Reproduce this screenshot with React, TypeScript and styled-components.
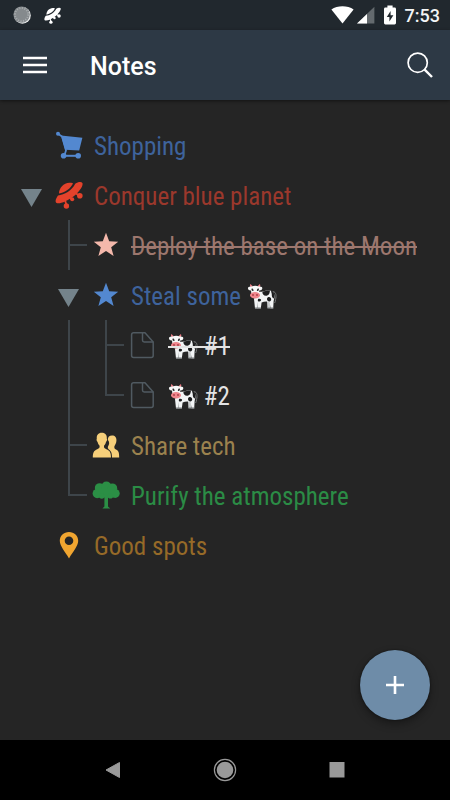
import React from 'react';
import styled, { createGlobalStyle } from 'styled-components';

const GlobalStyle = createGlobalStyle`
  *, *::before, *::after { box-sizing: border-box; }
  body {
    margin: 0;
    background: #252525;
    color: #f2f2f2;
    font-family: Roboto, "Liberation Sans", sans-serif;
  }
  svg { display: block; flex: none; }
`;

const Screen = styled.div`
  display: flex;
  flex-direction: column;
  min-height: 100vh;
`;

const StatusBar = styled.div`
  display: flex;
  align-items: center;
  justify-content: space-between;
  height: 30px;
  padding: 0 10px 0 13px;
  background: #21282e;
`;

const StatusGroup = styled.div<{ $gap: number }>`
  display: flex;
  align-items: center;
  gap: ${p => p.$gap}px;
`;

const Clock = styled.time`
  padding-top: 2px;
  font-size: 18px;
  line-height: 24px;
  font-weight: 500;
  color: #f4f5f5;
`;

const AppBar = styled.header`
  display: flex;
  align-items: center;
  height: 70px;
  padding: 0 10px 0 15px;
  background: #2d3945;
  box-shadow: 0 1px 3px rgba(0, 0, 0, 0.5);
`;

const Title = styled.h1`
  flex: 1;
  margin: 0 0 0 35px;
  padding-top: 4px;
  font-size: 25px;
  line-height: 32px;
  font-weight: 500;
  color: #fff;
`;

const IconButton = styled.button`
  display: flex;
  align-items: center;
  justify-content: center;
  width: 40px;
  height: 40px;
  padding: 0;
  border: 0;
  background: none;
  color: #fff;
  cursor: pointer;
`;

const Main = styled.main`
  display: flex;
  flex-direction: column;
  flex: 1;
`;

const Tree = styled.ul`
  flex: 1;
  margin: 0;
  padding: 20px 13px 0;
  list-style: none;
`;

const Row = styled.li`
  display: flex;
  align-items: center;
  height: 50px;
`;

const Cell = styled.span`
  display: flex;
  flex: none;
  align-items: center;
  justify-content: center;
  width: 38px;
  height: 50px;
`;

const Toggle = styled.button`
  display: flex;
  flex: none;
  align-items: center;
  justify-content: center;
  width: 37px;
  height: 50px;
  padding: 6px 0 0;
  border: 0;
  background: none;
  cursor: pointer;
`;

const Guide = styled.span`
  display: flex;
  flex: none;
  flex-direction: column;
  width: 37px;
  height: 50px;
  padding-left: 18px;
`;

const GuideTop = styled.span<{ $tick: boolean }>`
  height: 26px;
  border-left: 2px solid #3e454a;
  border-bottom: ${p => (p.$tick ? '2px solid #3e454a' : '0')};
`;

const GuideBottom = styled.span`
  height: 24px;
  border-left: 2px solid #3e454a;
`;

const Label = styled.span<{ $color: string }>`
  position: relative;
  display: inline-flex;
  align-items: center;
  margin-left: 6px;
  padding-top: 4px;
  font-family: "Roboto Condensed", Roboto, sans-serif;
  font-size: 25px;
  line-height: 32px;
  white-space: pre;
  color: ${p => p.$color};
`;

const StruckLabel = styled(Label).attrs({ as: 's' })`
  text-decoration: none;

  &::after {
    content: '';
    position: absolute;
    left: 0;
    right: 0;
    top: 19px;
    height: 2px;
    background: currentColor;
  }
`;

const FabArea = styled.div`
  display: flex;
  justify-content: flex-end;
  padding: 0 20px 20px;
`;

const Fab = styled.button`
  display: flex;
  align-items: center;
  justify-content: center;
  width: 70px;
  height: 70px;
  padding: 0;
  border: 0;
  border-radius: 50%;
  background: #6e8ca8;
  box-shadow: 0 0 2px rgba(0, 0, 0, 0.6), 0 4px 8px rgba(0, 0, 0, 0.35);
  cursor: pointer;
`;

const NavBar = styled.nav`
  display: flex;
  align-items: center;
  justify-content: center;
  gap: 72px;
  height: 60px;
  background: #000;
`;

const CartIcon = () => (
  <svg width="28" height="28" viewBox="0 0 28 28" fill="#5388d0">
    <circle cx="3" cy="2.8" r="2" />
    <path d="M3 2.8 L7 5.5 L11 19.5 L9.5 24" fill="none" stroke="#5388d0" strokeWidth="1.8" />
    <path d="M6 4.6 L27.4 6.8 L24.2 19.4 L10.2 18.8 Z" />
    <path d="M9 24.8 H23.5" stroke="#5388d0" strokeWidth="2" />
    <circle cx="8.6" cy="24.8" r="2.8" />
    <circle cx="23.2" cy="24.8" r="2.8" />
  </svg>
);

const UfoIcon = ({ size, color }: { size: number; color: string }) => (
  <svg width={size} height={size} viewBox="0 0 28 28" fill={color}>
    <path d="M4 12.6 C3.8 7 8.6 2 14.4 1.7 C16.4 1.6 17.8 1.9 18 2.6 C15.6 7.6 10 11.8 4 12.6 Z" />
    <path d="M20.2 2.7 C23 .9 26.4 .6 27.4 2 C28.6 4.5 24.4 11 18.4 15.5 C12.4 20 3.8 23.8 1.2 21.8 C-.2 20.4 1 17 3 14.4 C9.4 13.8 17 9.5 20.2 2.7 Z" />
    <path d="M10 19 L11.4 24 M14.5 16 L16.8 18 M20.5 12 L24.4 15" stroke={color} strokeWidth="1.8" />
    <circle cx="11.4" cy="25" r="2.7" />
    <circle cx="17.2" cy="18.2" r="2" />
    <circle cx="24.8" cy="14.8" r="2.8" />
  </svg>
);

const StarIcon = ({ color }: { color: string }) => (
  <svg width="26" height="26" viewBox="0 0 26 26" fill={color}>
    <path d="M13 .8 L16.2 9.2 L25.2 9.7 L18.2 15.3 L20.6 24 L13 19 L5.4 24 L7.8 15.3 L.8 9.7 L9.8 9.2 Z" />
  </svg>
);

const FileIcon = () => (
  <svg width="26" height="28" viewBox="0 0 26 28" fill="none" stroke="#505a61" strokeWidth="1.5" strokeLinejoin="round">
    <path d="M15 1.8 H3.6 Q1.6 1.8 1.6 3.8 V24.4 Q1.6 26.4 3.6 26.4 H21.2 Q23.2 26.4 23.2 24.4 V11 Z" />
    <path d="M12.5 1.8 V9.3 Q12.5 11 14.2 11 H23.2" />
  </svg>
);

const PeopleIcon = () => (
  <svg width="28" height="26" viewBox="0 0 28 26" fill="#f6cf7a">
    <path d="M15.8 7.8 C15.8 4.8 17.4 3.4 20 3.4 C23 3.4 24.8 5.4 24.4 9 C24.2 11.6 23 13 22.4 14.2 C22.2 16 22.4 16.6 24 17.6 C26.6 19 27.2 20.4 27.2 25.6 H20 C20 20.8 19 18.8 16.8 17.4 C16 16.8 15.6 16 16 14.6 C17.4 12.4 17.8 10 15.8 7.8 Z" />
    <path d="M9.8 .8 C13.4 .8 15.2 3.2 14.8 6.6 C15.4 8.2 14.8 9.4 14 10 C13.6 11.8 12.8 12.8 12 13.8 C11.8 15.8 12.4 16.4 14.4 17.2 C17.8 18.6 19 20.2 19 25.6 H.8 C.8 20.2 2 18.6 5.2 17.2 C7.2 16.4 7.8 15.8 7.6 13.8 C6.8 12.8 6 11.8 5.6 10 C4.8 9.4 4.2 8.2 4.8 6.6 C4.4 3.2 6.2 .8 9.8 .8 Z" />
  </svg>
);

const TreeIcon = () => (
  <svg width="28" height="28" viewBox="0 0 28 28" fill="#2b8f45">
    <circle cx="5.2" cy="12.6" r="4.6" />
    <circle cx="7.6" cy="7" r="4.8" />
    <circle cx="14.4" cy="5.6" r="5" />
    <circle cx="20.4" cy="7.2" r="4.8" />
    <circle cx="23.2" cy="12.4" r="4.5" />
    <path d="M5 8 H22 V16.4 H5 Z" />
    <circle cx="9.8" cy="15" r="2.8" />
    <circle cx="18.4" cy="15" r="2.6" />
    <path d="M12.4 16 H16 V25.4 L18.2 27.6 H10.4 L12.4 25.4 Z" />
  </svg>
);

const PinIcon = () => (
  <svg width="20" height="28" viewBox="0 0 20 28" fill="#f0a530">
    <path fillRule="evenodd" d="M10 1 C15.2 1 19.2 4.8 19.2 9.8 C19.2 15.2 14 20.4 10 27.4 C6 20.4 .8 15.2 .8 9.8 C.8 4.8 4.8 1 10 1 Z M10 5.4 A4.3 4.3 0 1 0 10 14 A4.3 4.3 0 1 0 10 5.4 Z" />
  </svg>
);

const CowIcon = () => (
  <svg width="30" height="28" viewBox="0 0 30 28" role="img" aria-label="cow">
    <path d="M26 8.6 C29.4 9 29.4 13 28.6 16.4 C28.4 18 28.2 19 27.6 20" fill="none" stroke="#77797a" strokeWidth="1" />
    <path d="M20 18 L20.4 25 H23 L23.6 18 Z M9.6 17 L10.2 25 H13 L13.4 18 Z" fill="#c9cccd" />
    <path d="M10 8.4 C14 9.6 17 7.6 21 7.4 C25.6 7.2 27.6 9.4 27.4 14 C27.2 16 26.8 17 26.6 18.6 L26.2 25.4 H23.6 L22.6 19.2 C20 18 17 18.4 14.6 19.6 L13.8 25.4 H8 L7 16 Z" fill="#f1f3f4" />
    <path d="M10.4 19 L10.9 25.4 H9.9 Z" fill="#9ea1a3" />
    <path d="M15.4 8.8 C17.6 8 21 7.2 23 7.5 C22.6 10 22.4 11.8 20.2 12.6 C17.4 13.4 15 11.4 15.4 8.8 Z M24.2 7.8 C27.4 8.6 27.8 12.4 26.8 15.6 C25.4 15.2 24.6 13.4 24.8 11.6 C24.9 10.2 23.8 9 24.2 7.8 Z M21 14.2 C22.8 13.4 24.2 14.8 24.2 16.6 C24.2 18.2 22.8 18.8 21.4 18.2 C19.8 17.4 19.4 15 21 14.2 Z M11 16 C12.8 15.2 14.6 16 14 17.6 C13.2 19 11.6 18.6 10.8 18 Z" fill="#1c1d1e" />
    <path d="M8 25.2 H13.8 M20.4 25.2 H26.2" stroke="#777a7c" strokeWidth="1.2" />
    <path d="M3.9 4.6 C2.6 3 2.8 1.4 3.8 1 C4.2 2.2 5 2.6 6 3.4 Z M12.3 4.6 C13.8 3 13.4 1.4 12.6 1 C12.2 2.2 11.2 2.6 10.4 3.4 Z" fill="#ee7d86" />
    <path d="M4.8 3.6 C6.6 2.4 9.8 2.4 11.6 3.6 C13.2 3.8 14.8 3.6 15.4 5 C15.2 7 13.6 7.6 12.2 7.4 L11.6 12.4 H4.6 L4 7.4 C2.6 7.6 1 7 .9 5 C1.6 3.6 3.2 3.8 4.8 3.6 Z" fill="#f7f8f8" />
    <path d="M4.9 5.2 Q6.6 5.2 6.6 8 Q5 8.4 4.4 6.8 Z M11.5 5.2 Q9.8 5.2 9.8 8 Q11.4 8.4 12 6.8 Z" fill="#292b2c" />
    <ellipse cx="8" cy="12.2" rx="5" ry="3.2" fill="#ef858c" />
    <circle cx="6" cy="12" r=".9" fill="#a83b44" />
    <circle cx="10" cy="12" r=".9" fill="#a83b44" />
  </svg>
);

type GuideKind = 'line' | 'tee' | 'elbow' | 'blank';

interface Note {
  guides: GuideKind[];
  open?: boolean;
  icon: React.ReactNode;
  color: string;
  struck?: boolean;
  content: React.ReactNode;
}

const notes: Note[] = [
  { guides: ['blank'], icon: <CartIcon />, color: '#3e639c', content: 'Shopping' },
  { guides: [], open: true, icon: <UfoIcon size={28} color="#e3422b" />, color: '#9b382c', content: 'Conquer blue planet' },
  { guides: ['blank', 'tee'], icon: <StarIcon color="#f4b8ab" />, color: '#9d776e', struck: true, content: 'Deploy the base on the Moon' },
  { guides: ['blank'], open: true, icon: <StarIcon color="#5388d0" />, color: '#3e639c', content: <>Steal some <CowIcon /></> },
  { guides: ['blank', 'line', 'tee'], icon: <FileIcon />, color: '#e4e4e4', struck: true, content: <><CowIcon /> #1</> },
  { guides: ['blank', 'line', 'elbow'], icon: <FileIcon />, color: '#e4e4e4', content: <><CowIcon /> #2</> },
  { guides: ['blank', 'tee'], icon: <PeopleIcon />, color: '#9b824e', content: 'Share tech' },
  { guides: ['blank', 'elbow'], icon: <TreeIcon />, color: '#2b8c45', content: 'Purify the atmosphere' },
  { guides: ['blank'], icon: <PinIcon />, color: '#966a28', content: 'Good spots' },
];

const GuideMark = ({ kind }: { kind: GuideKind }) => (
  <Guide>
    {kind !== 'blank' && <GuideTop $tick={kind !== 'line'} />}
    {(kind === 'line' || kind === 'tee') && <GuideBottom />}
  </Guide>
);

const NoteRow = ({ note }: { note: Note }) => {
  const Text = note.struck ? StruckLabel : Label;
  return (
    <Row>
      {note.guides.map((kind, i) => <GuideMark key={i} kind={kind} />)}
      {note.open && (
        <Toggle aria-label="Collapse" aria-expanded="true">
          <svg width="21" height="18" viewBox="0 0 21 18" fill="#74838b"><path d="M0 0 H21 L10.5 18 Z" /></svg>
        </Toggle>
      )}
      <Cell>{note.icon}</Cell>
      <Text $color={note.color}>{note.content}</Text>
    </Row>
  );
};

const SpinnerIcon = () => (
  <svg width="18" height="18" viewBox="0 0 18 18">
    <circle cx="9.4" cy="9.4" r="8.4" fill="#e8eaea" />
    <circle cx="8.6" cy="8.6" r="8.2" fill="#858a8d" />
    <circle cx="8.6" cy="8.6" r="6.6" fill="none" stroke="#a9adaf" strokeWidth="2" strokeDasharray="1 1.6" />
  </svg>
);

export default function App() {
  return (
    <Screen>
      <GlobalStyle />
      <StatusBar>
        <StatusGroup $gap={13}>
          <SpinnerIcon />
          <UfoIcon size={17} color="#fff" />
        </StatusGroup>
        <StatusGroup $gap={9}>
          <StatusGroup $gap={3}>
            <svg width="23" height="18" viewBox="0 0 23 18" fill="#fff"><path d="M.4 3.6 C6.4 -.8 16.6 -.8 22.6 3.6 L11.5 17.6 Z" /></svg>
            <svg width="18" height="18" viewBox="0 0 18 18">
              <path d="M0 17.6 L17.4 .8 V17.6 Z" fill="#646a6e" />
              <path d="M0 17.6 L10 8 V17.6 Z" fill="#fff" />
            </svg>
          </StatusGroup>
          <svg width="12" height="20" viewBox="0 0 12 20">
            <path d="M3.4 .6 H8.6 V2.6 H10.6 Q12 2.6 12 4 V18 Q12 19.4 10.6 19.4 H1.4 Q0 19.4 0 18 V4 Q0 2.6 1.4 2.6 H3.4 Z" fill="#fff" />
            <path d="M6.6 6 L2.8 12 H5.4 V16.4 L9.4 10.2 H6.6 Z" fill="#21282e" />
          </svg>
          <Clock dateTime="07:53">7:53</Clock>
        </StatusGroup>
      </StatusBar>
      <AppBar>
        <IconButton aria-label="Menu">
          <svg width="24" height="18" viewBox="0 0 24 18" stroke="#fff" strokeWidth="2.6"><path d="M0 2 H24 M0 9 H24 M0 16 H24" /></svg>
        </IconButton>
        <Title>Notes</Title>
        <IconButton aria-label="Search">
          <svg width="26" height="26" viewBox="0 0 26 26" fill="none" stroke="#fff">
            <circle cx="10.7" cy="10.7" r="9.6" strokeWidth="1.7" />
            <path d="M17.4 17.4 L25 25" strokeWidth="2.4" />
          </svg>
        </IconButton>
      </AppBar>
      <Main>
        <Tree>
          {notes.map((note, i) => <NoteRow key={i} note={note} />)}
        </Tree>
        <FabArea>
          <Fab aria-label="Add note">
            <svg width="18" height="18" viewBox="0 0 18 18" stroke="#fff" strokeWidth="2.6"><path d="M9 0 V18 M0 9 H18" /></svg>
          </Fab>
        </FabArea>
      </Main>
      <NavBar>
        <IconButton aria-label="Back">
          <svg width="16" height="18" viewBox="0 0 16 18" fill="#999" stroke="#999" strokeLinejoin="round"><path d="M1 9 L14.5 1.5 V16.5 Z" /></svg>
        </IconButton>
        <IconButton aria-label="Home">
          <svg width="24" height="24" viewBox="0 0 24 24">
            <circle cx="12" cy="12" r="10.6" fill="none" stroke="#999" strokeWidth="1.2" />
            <circle cx="12" cy="12" r="8.3" fill="#999" />
          </svg>
        </IconButton>
        <IconButton aria-label="Recent apps">
          <svg width="16" height="16" viewBox="0 0 16 16" fill="#999"><path d="M.5 0 H15.5 V15.5 H.5 Z" /></svg>
        </IconButton>
      </NavBar>
    </Screen>
  );
}
